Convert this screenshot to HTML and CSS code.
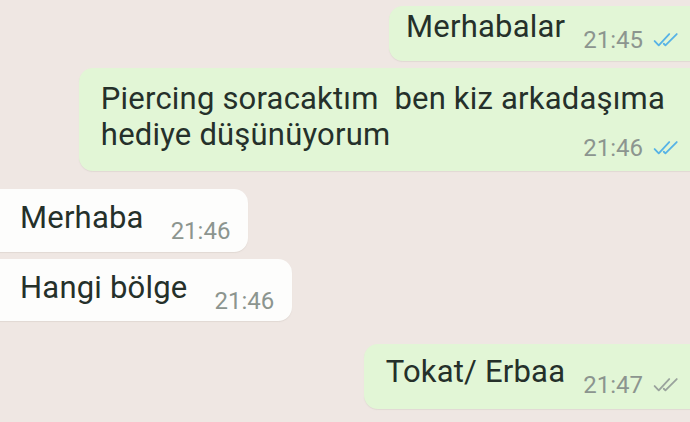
FILE: index.html
```html
<!DOCTYPE html>
<html lang="tr">
<head>
<meta charset="utf-8">
<title>Sohbet</title>
<link rel="stylesheet" href="styles.css">
</head>
<body>
<div class="chat">
  <div class="msg out m1">
    <span class="text">Merhabalar</span>
    <span class="meta"><span class="time">21:45</span><svg class="ticks read" viewBox="0 0 24 13"><path d="M1 7.5 L4.8 11.5 L14.5 1"/><path d="M9.5 10 L11 11.5 L21.5 1"/></svg></span>
  </div>
  <div class="msg out m2">
    <div class="text multi">Piercing soracaktım&nbsp; ben kiz arkadaşıma<br>hediye düşünüyorum</div>
    <span class="meta"><span class="time">21:46</span><svg class="ticks read" viewBox="0 0 24 13"><path d="M1 7.5 L4.8 11.5 L14.5 1"/><path d="M9.5 10 L11 11.5 L21.5 1"/></svg></span>
  </div>
  <div class="msg in m3">
    <span class="text">Merhaba</span>
    <span class="meta"><span class="time">21:46</span></span>
  </div>
  <div class="msg in m4">
    <span class="text">Hangi bölge</span>
    <span class="meta"><span class="time">21:46</span></span>
  </div>
  <div class="msg out m5">
    <span class="text">Tokat/ Erbaa</span>
    <span class="meta"><span class="time">21:47</span><svg class="ticks sent" viewBox="0 0 24 13"><path d="M1 7.5 L4.8 11.5 L14.5 1"/><path d="M9.5 10 L11 11.5 L21.5 1"/></svg></span>
  </div>
</div>
</body>
</html>
```
FILE: styles.css
```css
html, body {
  margin: 0;
  padding: 0;
}
body {
  width: 690px;
  height: 422px;
  overflow: hidden;
  background: #efe7e3;
  font-family: Roboto, "Noto Sans", "Liberation Sans", sans-serif;
  color: #25302a;
}
.chat {
  display: flex;
  flex-direction: column;
  padding-top: 6px;
}
.msg {
  display: flex;
  align-items: flex-start;
  border-radius: 14px;
  box-sizing: border-box;
}
.out {
  align-self: flex-end;
  background: #e2f6d6;
  margin-right: -20px;
  padding-right: 30px;
  box-shadow: 0 1px 1px rgba(150, 140, 130, 0.15);
}
.in {
  align-self: flex-start;
  background: #fdfdfc;
  margin-left: -20px;
  padding-left: 40px;
  padding-right: 18px;
  box-shadow: 0 1px 1px rgba(150, 140, 130, 0.15);
}
.text {
  font-size: 31px;
  line-height: 36px;
  letter-spacing: 0.2px;
}
.meta {
  display: flex;
  align-items: center;
  margin-left: 18px;
  margin-top: 18px;
}
.in .meta { margin-left: 27px; }
.time {
  font-size: 24px;
  line-height: 26px;
  color: #8c958f;
}
.ticks {
  width: 27px;
  height: 14px;
  margin-left: 10px;
  fill: none;
  stroke-width: 1.7;
  stroke-linecap: round;
  stroke-linejoin: round;
}
.ticks.read { stroke: #57b3e6; }
.ticks.sent { stroke: #9aa39d; }

.m1 {
  padding-left: 17px;
  padding-top: 3px;
  height: 55px;
}
.m2 {
  margin-top: 7px;
  flex-direction: column;
  align-items: stretch;
  padding-left: 22px;
  padding-top: 13px;
  padding-bottom: 10px;
}
.m2 .text { margin-right: 15px; }
.m2 .meta {
  align-self: flex-end;
  margin-top: -18px;
}
.m3 {
  margin-top: 18px;
  padding-top: 11px;
  height: 63px;
}
.m4 {
  margin-top: 7px;
  padding-top: 11px;
  height: 62px;
}
.m5 {
  margin-top: 23px;
  padding-left: 22px;
  padding-top: 10px;
  height: 65px;
}
```
